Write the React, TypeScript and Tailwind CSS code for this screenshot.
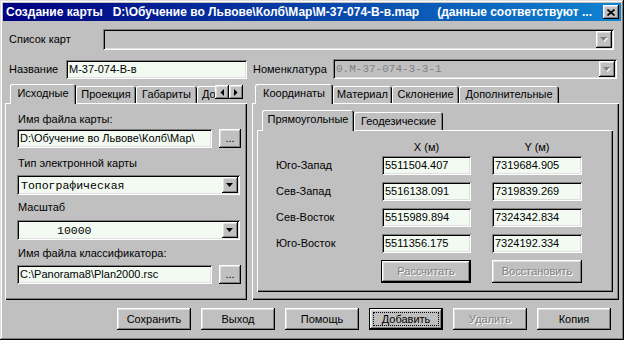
import React from "react";

const RAISED =
  "shadow-[inset_-1px_-1px_#000000,inset_1px_1px_#ffffff,inset_-2px_-2px_#808080,inset_2px_2px_#dfdfdf]";
const SUNKEN =
  "shadow-[inset_1px_1px_#808080,inset_-1px_-1px_#ffffff,inset_2px_2px_#000000,inset_-2px_-2px_#dfdfdf]";
const PANEL =
  "shadow-[inset_1px_1px_#ffffff,inset_-1px_-1px_#000000,inset_-2px_-2px_#808080]";
const TAB =
  "shadow-[inset_1px_1px_#ffffff,inset_-1px_0_#000000,inset_-2px_0_#808080]";
const FIELD_BG = "bg-[#f2faf2]";
const MONO = "font-['Liberation_Mono',monospace] text-[11.5px]";
const DIS = "text-[#808080] [text-shadow:1px_1px_0_#ffffff]";

function Tri({ dis }: { dis?: boolean }) {
  return (
    <svg width="8" height="5" viewBox="0 0 8 5">
      {dis && <polygon points="1,1 8,1 4.5,5" fill="#ffffff" />}
      <polygon points="0,0 7,0 3.5,4" fill={dis ? "#808080" : "#000000"} />
    </svg>
  );
}

function Combo({
  cls,
  children,
  dis,
}: {
  cls: string;
  children?: React.ReactNode;
  dis?: boolean;
}) {
  return (
    <div className={`${cls} ${SUNKEN} ${dis ? "bg-[#c0c0c0]" : FIELD_BG} flex p-[2px]`}>
      <div className="flex-1 flex items-center overflow-hidden whitespace-nowrap">{children}</div>
      <div className={`w-[16px] bg-[#c0c0c0] ${RAISED} flex items-center justify-center`}>
        <Tri dis={dis} />
      </div>
    </div>
  );
}

function Field({ cls, children }: { cls: string; children?: React.ReactNode }) {
  return (
    <div className={`${cls} ${SUNKEN} ${FIELD_BG} pl-[3px] flex items-center overflow-hidden whitespace-nowrap`}>
      {children}
    </div>
  );
}

function Btn({
  children,
  cls,
  dis,
  def,
  focus,
}: {
  children?: React.ReactNode;
  cls: string;
  dis?: boolean;
  def?: boolean;
  focus?: boolean;
}) {
  return (
    <div className={`${cls} bg-[#c0c0c0] flex shrink-0 ${def ? "border border-black" : ""}`}>
      <div className={`flex-1 flex ${RAISED} ${focus ? "p-[3px]" : ""}`}>
        <div
          className={`flex-1 flex items-center justify-center whitespace-nowrap ${
            focus ? "border border-dotted border-black" : ""
          } ${dis ? DIS : ""}`}
        >
          {children}
        </div>
      </div>
    </div>
  );
}

function Tab({
  children,
  sel,
  cls,
}: {
  children: React.ReactNode;
  sel?: boolean;
  cls: string;
}) {
  return (
    <div
      className={`${cls} shrink-0 bg-[#c0c0c0] rounded-tl-[2px] rounded-tr-[3px] ${TAB} flex items-center whitespace-nowrap ${
        sel ? "h-[20px] pb-[2px]" : "h-[17px] mb-[1px]"
      }`}
    >
      {children}
    </div>
  );
}

const rows = [
  ["Юго-Запад", "5511504.407", "7319684.905"],
  ["Сев-Запад", "5516138.091", "7319839.269"],
  ["Сев-Восток", "5515989.894", "7324342.834"],
  ["Юго-Восток", "5511356.175", "7324192.334"],
];

export default function App() {
  return (
    <div className="w-[624px] h-[340px] bg-[#c0c0c0] p-[3px] flex flex-col text-[11px] leading-[13px] text-black font-['Liberation_Sans',Arial,sans-serif] shadow-[inset_-1px_-1px_#000000,inset_1px_1px_#dfdfdf,inset_-2px_-2px_#808080,inset_2px_2px_#ffffff] overflow-hidden">
      {/* Title bar */}
      <div className="h-[18px] shrink-0 flex items-center bg-[linear-gradient(90deg,#000080,#1084d0)] pl-[3px] pr-[2px]">
        <div className="flex-1 overflow-hidden whitespace-nowrap text-white font-bold text-[12px] leading-[18px]">
          <span>Создание карты</span>
          <span className="ml-[10px]">D:\Обучение во Львове\Колб\Мар\М-37-074-В-в.map</span>
          <span className="ml-[18px]">(данные соответствуют ...</span>
        </div>
        <div className={`w-[16px] h-[14px] bg-[#c0c0c0] ${RAISED} flex items-center justify-center`}>
          <svg width="8" height="7" viewBox="0 0 8 7">
            <path d="M0.5 0.5 L7.5 6.5 M7.5 0.5 L0.5 6.5" stroke="#000" strokeWidth="1.6" />
          </svg>
        </div>
      </div>

      {/* Row 1 */}
      <div className="mt-[8px] h-[21px] flex items-center shrink-0">
        <div className="w-[100px] pl-[6px]">Список карт</div>
        <Combo cls="w-[511px] h-[21px]" dis />
      </div>

      {/* Row 2 */}
      <div className="mt-[9px] h-[20px] flex items-center shrink-0">
        <div className="w-[63px] pl-[6px]">Название</div>
        <Field cls="w-[181px] h-[19px]">М-37-074-В-в</Field>
        <div className="w-[86px] pl-[6px]">Номенклатура</div>
        <Combo cls="w-[284px] h-[20px]" dis>
          <span className={`${MONO} text-[11px] text-[#808080] pl-[1px]`}>0.M-37-074-3-3-1</span>
        </Combo>
      </div>

      {/* Main panels */}
      <div className="mt-[5px] flex shrink-0">
        {/* Left */}
        <div className="ml-[2px] w-[242px] flex flex-col">
          <div className="h-[20px] -mb-[1px] relative z-10 flex items-end pl-[5px]">
            <div className="w-[205px] h-full overflow-hidden flex items-end">
              <Tab sel cls="w-[66px] justify-center">Исходные</Tab>
              <Tab cls="w-[60px] justify-center">Проекция</Tab>
              <Tab cls="w-[61px] justify-center">Габариты</Tab>
              <Tab cls="w-[30px] pl-[5px]">До</Tab>
            </div>
            <div className="self-start mt-[1px] flex">
              <div className={`w-[14px] h-[14px] bg-[#c0c0c0] ${RAISED} flex items-center justify-center`}>
                <svg width="4" height="7" viewBox="0 0 4 7">
                  <polygon points="4,0 4,7 0.5,3.5" fill="#000" />
                </svg>
              </div>
              <div className={`w-[14px] h-[14px] bg-[#c0c0c0] ${RAISED} flex items-center justify-center`}>
                <svg width="4" height="7" viewBox="0 0 4 7">
                  <polygon points="0,0 0,7 3.5,3.5" fill="#000" />
                </svg>
              </div>
            </div>
          </div>
          <div className={`h-[197px] ${PANEL} flex flex-col pl-[12px] pt-[10px]`}>
            <div className="h-[13px] pl-[1px]">Имя файла карты:</div>
            <div className="mt-[3px] flex h-[19px]">
              <Field cls="w-[195px] h-full">D:\Обучение во Львове\Колб\Мар\</Field>
              <Btn cls="ml-[7px] w-[22px] h-full">...</Btn>
            </div>
            <div className="mt-[9px] h-[13px] pl-[1px]">Тип электронной карты</div>
            <Combo cls="mt-[5px] w-[223px] h-[20px]">
              <span className={`${MONO} pl-[2px]`}>Топографическая</span>
            </Combo>
            <div className="mt-[6px] h-[13px] pl-[1px]">Масштаб</div>
            <Combo cls="mt-[6px] w-[223px] h-[20px]">
              <span className={`${MONO} pl-[38px]`}>10000</span>
            </Combo>
            <div className="mt-[7px] h-[13px] pl-[1px]">Имя файла классификатора:</div>
            <div className="mt-[5px] flex h-[19px]">
              <Field cls="w-[195px] h-full">C:\Panorama8\Plan2000.rsc</Field>
              <Btn cls="ml-[7px] w-[22px] h-full">...</Btn>
            </div>
          </div>
        </div>

        {/* Right */}
        <div className="ml-[5px] w-[367px] flex flex-col">
          <div className="h-[20px] -mb-[1px] relative z-10 flex items-end pl-[3px]">
            <Tab sel cls="w-[78px] justify-center">Координаты</Tab>
            <Tab cls="w-[59px] justify-center">Материал</Tab>
            <Tab cls="w-[67px] justify-center">Склонение</Tab>
            <Tab cls="w-[100px] justify-center">Дополнительные</Tab>
          </div>
          <div className={`h-[197px] ${PANEL} flex flex-col pt-[7px] pl-[5px] pr-[6px] pb-[8px]`}>
            <div className="h-[21px] -mb-[1px] relative z-10 flex items-end pl-[5px]">
              <Tab sel cls="w-[92px] justify-center !h-[21px]">Прямоугольные</Tab>
              <Tab cls="w-[89px] justify-center !h-[18px]">Геодезические</Tab>
            </div>
            <div className={`flex-1 ${PANEL} flex flex-col pl-[19px] pt-[11px]`}>
              <div className="flex h-[13px]">
                <div className="w-[106px]" />
                <div className="w-[89px] text-center">X (м)</div>
                <div className="ml-[21px] w-[90px] text-center">Y (м)</div>
              </div>
              <div className="mt-[2px] flex flex-col gap-[7px]">
                {rows.map((r) => (
                  <div key={r[0]} className="flex h-[19px] items-center">
                    <div className="w-[106px]">{r[0]}</div>
                    <Field cls="w-[89px] h-full">{r[1]}</Field>
                    <Field cls="ml-[21px] w-[90px] h-full">{r[2]}</Field>
                  </div>
                ))}
              </div>
              <div className="mt-[7px] flex h-[23px]">
                <div className="w-[105px]" />
                <Btn cls="w-[90px] h-full" dis def>
                  Рассчитать
                </Btn>
                <Btn cls="ml-[21px] w-[90px] h-full" dis>
                  Восстановить
                </Btn>
              </div>
            </div>
          </div>
        </div>
      </div>

      {/* Bottom buttons */}
      <div className="mt-[8px] h-[22px] flex gap-[10px] pl-[114px] shrink-0">
        <Btn cls="w-[74px] h-full">Сохранить</Btn>
        <Btn cls="w-[74px] h-full">Выход</Btn>
        <Btn cls="w-[74px] h-full">Помощь</Btn>
        <Btn cls="w-[74px] h-full" def focus>
          Добавить
        </Btn>
        <Btn cls="w-[74px] h-full" dis>
          Удалить
        </Btn>
        <Btn cls="w-[74px] h-full">Копия</Btn>
      </div>
    </div>
  );
}
